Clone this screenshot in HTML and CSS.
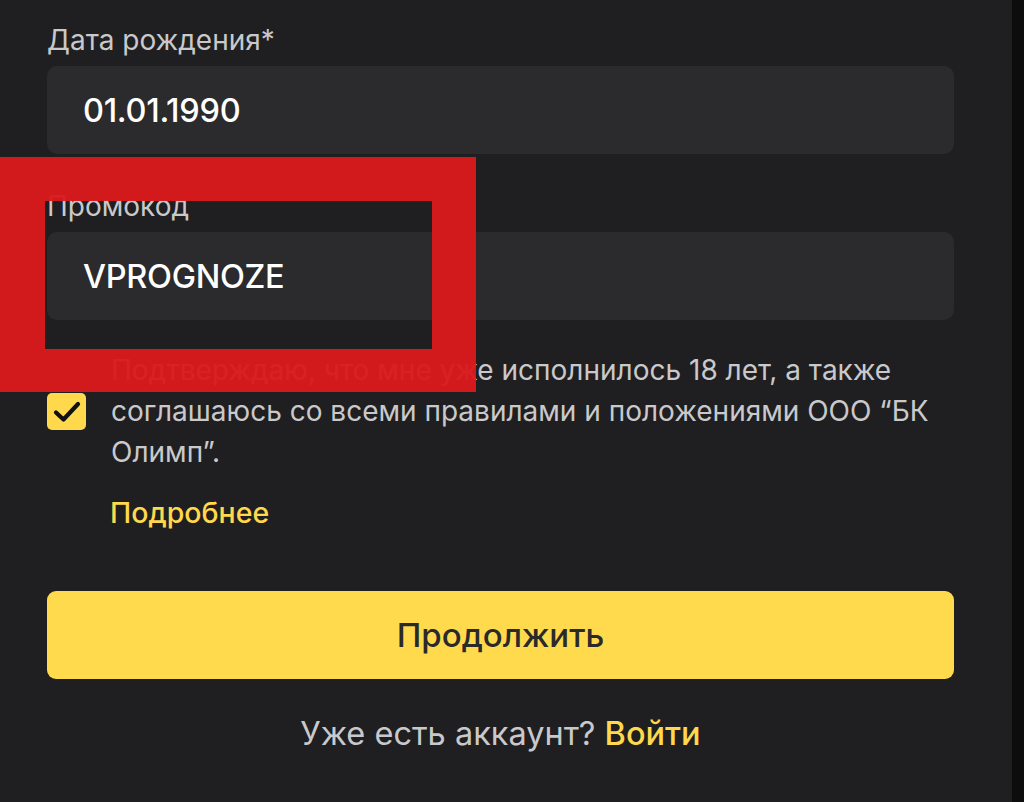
FILE: index.html
```html
<!DOCTYPE html>
<html lang="ru">
<head>
  <meta charset="UTF-8" />
  <meta name="viewport" content="width=device-width, initial-scale=1.0" />
  <title>Регистрация</title>
  <link rel="stylesheet" href="styles.css">
</head>
<body>
  <div class="page">
    <form class="form">
      <label class="field">
        <span class="field-label">Дата рождения*</span>
        <input class="field-input" type="text" value="01.01.1990">
      </label>

      <label class="field field-promo">
        <span class="field-label">Промокод</span>
        <input class="field-input" type="text" value="VPROGNOZE">
      </label>

      <div class="agree">
        <span class="checkbox">
          <svg width="30" height="26" viewBox="0 0 30 26">
            <path d="M4 13.5 L11.5 20.5 L26 5" fill="none" stroke="#111" stroke-width="4.2" stroke-linecap="round" stroke-linejoin="round"/>
          </svg>
        </span>
        <p class="agree-text">Подтверждаю, что мне уже исполнилось 18 лет, а также соглашаюсь со всеми правилами и положениями ООО “БК Олимп”.</p>
      </div>

      <a class="more" href="#">Подробнее</a>

      <button class="submit" type="button">Продолжить</button>

      <p class="login">Уже есть аккаунт? <a href="#">Войти</a></p>
    </form>

    <!-- annotation frame from the screenshot -->
    <div class="highlight"></div>
  </div>
</body>
</html>
```

FILE: styles.css
```css
html {
  background: #0d0d0e;
}

body {
  margin: 0;
  font-family: Inter, "Noto Sans", sans-serif;
  color: #c9c9cb;
}

.page {
  position: relative;
  width: 1012px;
  min-height: 802px;
  background: #1f1f21;
  overflow: hidden;
}

.form {
  display: flex;
  flex-direction: column;
  width: 907px;
  padding: 24px 0 0 47px;
}

.field {
  display: flex;
  flex-direction: column;
  gap: 10px;
}

.field-promo {
  margin-top: 36px;
}

.field-label {
  font-size: 28px;
  line-height: 32px;
  color: #c9c9cb;
}

.field-input {
  box-sizing: border-box;
  height: 88px;
  padding: 0 36px;
  border: none;
  border-radius: 10px;
  background: #2b2a2d;
  color: #fff;
  font-family: inherit;
  font-size: 32.5px;
  font-weight: 500;
  letter-spacing: -0.3px;
  outline: none;
}

.agree {
  display: flex;
  align-items: center;
  gap: 25px;
  margin-top: 30px;
}

.checkbox {
  flex: none;
  display: flex;
  align-items: center;
  justify-content: center;
  width: 39px;
  height: 37px;
  border-radius: 5px;
  background: #ffd84c;
}

.agree-text {
  width: 830px;
  margin: 0;
  font-size: 28px;
  line-height: 41px;
  color: #c9c9cb;
}

.more {
  align-self: flex-start;
  margin: 19px 0 0 63px;
  font-size: 28.5px;
  line-height: 41px;
  font-weight: 500;
  color: #ffd84c;
  text-decoration: none;
}

.submit {
  height: 88px;
  margin-top: 58px;
  border: none;
  border-radius: 9px;
  background: #ffda4d;
  color: #2a2a2a;
  font-family: inherit;
  font-size: 33px;
  font-weight: 500;
  cursor: pointer;
}

.login {
  margin: 35px 0 0;
  text-align: center;
  font-size: 32.5px;
  line-height: 40px;
  color: #c9c9cb;
}

.login a {
  color: #ffd84c;
  font-weight: 500;
  text-decoration: none;
}

.highlight {
  position: absolute;
  left: 0;
  top: 157px;
  box-sizing: border-box;
  width: 476px;
  height: 235px;
  border-style: solid;
  border-color: #da1a1d;
  border-width: 44px 44px 43px 45px;
  opacity: 0.96;
}
```
